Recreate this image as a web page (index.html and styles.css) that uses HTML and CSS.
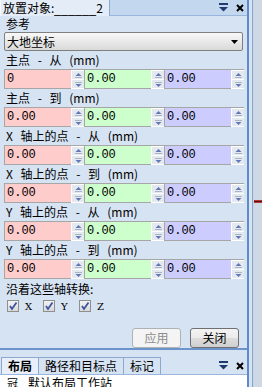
FILE: index.html
```html
<!DOCTYPE html>
<html>
<head>
<meta charset="utf-8">
<link rel="stylesheet" href="styles.css">
</head>
<body>
<div class="app">
  <div class="panel">
    <div class="hdr">
      <div class="tab">放置对象:<span class="us">______</span>2</div>
      <div class="hdr-icons">
        <svg class="ico" width="9" height="9" viewBox="0 0 9 9"><rect x="0" y="0" width="9" height="2" fill="#1f3a6e"/><polygon points="0,4 9,4 4.5,8.5" fill="#1f3a6e"/></svg>
        <svg class="ico" width="8" height="8" viewBox="0 0 8 8"><path d="M1 1 L7 7 M7 1 L1 7" stroke="#000" stroke-width="2"/></svg>
      </div>
    </div>
    <div class="body">
      <div class="lbl top">参考</div>
      <div class="select"><span>大地坐标</span><svg width="7" height="4" viewBox="0 0 7 4"><polygon points="0,0 7,0 3.5,4" fill="#000"/></svg></div>

      <div class="lbl">主点 - 从 (mm)</div>
      <div class="row">
        <div class="grp"><div class="inp pink">0</div><div class="spin"><div class="sb up"></div><div class="sb dn"></div></div></div>
        <div class="grp"><div class="inp green">0.00</div><div class="spin"><div class="sb up"></div><div class="sb dn"></div></div></div>
        <div class="grp"><div class="inp blue">0.00</div><div class="spin"><div class="sb up"></div><div class="sb dn"></div></div></div>
      </div>

      <div class="lbl">主点 - 到 (mm)</div>
      <div class="row">
        <div class="grp"><div class="inp pink">0.00</div><div class="spin"><div class="sb up"></div><div class="sb dn"></div></div></div>
        <div class="grp"><div class="inp green">0.00</div><div class="spin"><div class="sb up"></div><div class="sb dn"></div></div></div>
        <div class="grp"><div class="inp blue">0.00</div><div class="spin"><div class="sb up"></div><div class="sb dn"></div></div></div>
      </div>

      <div class="lbl">X 轴上的点 - 从 (mm)</div>
      <div class="row">
        <div class="grp"><div class="inp pink">0.00</div><div class="spin"><div class="sb up"></div><div class="sb dn"></div></div></div>
        <div class="grp"><div class="inp green">0.00</div><div class="spin"><div class="sb up"></div><div class="sb dn"></div></div></div>
        <div class="grp"><div class="inp blue">0.00</div><div class="spin"><div class="sb up"></div><div class="sb dn"></div></div></div>
      </div>

      <div class="lbl">X 轴上的点 - 到 (mm)</div>
      <div class="row">
        <div class="grp"><div class="inp pink">0.00</div><div class="spin"><div class="sb up"></div><div class="sb dn"></div></div></div>
        <div class="grp"><div class="inp green">0.00</div><div class="spin"><div class="sb up"></div><div class="sb dn"></div></div></div>
        <div class="grp"><div class="inp blue">0.00</div><div class="spin"><div class="sb up"></div><div class="sb dn"></div></div></div>
      </div>

      <div class="lbl">Y 轴上的点 - 从 (mm)</div>
      <div class="row">
        <div class="grp"><div class="inp pink">0.00</div><div class="spin"><div class="sb up"></div><div class="sb dn"></div></div></div>
        <div class="grp"><div class="inp green">0.00</div><div class="spin"><div class="sb up"></div><div class="sb dn"></div></div></div>
        <div class="grp"><div class="inp blue">0.00</div><div class="spin"><div class="sb up"></div><div class="sb dn"></div></div></div>
      </div>

      <div class="lbl">Y 轴上的点 - 到 (mm)</div>
      <div class="row">
        <div class="grp"><div class="inp pink">0.00</div><div class="spin"><div class="sb up"></div><div class="sb dn"></div></div></div>
        <div class="grp"><div class="inp green">0.00</div><div class="spin"><div class="sb up"></div><div class="sb dn"></div></div></div>
        <div class="grp"><div class="inp blue">0.00</div><div class="spin"><div class="sb up"></div><div class="sb dn"></div></div></div>
      </div>

      <div class="lbl conv">沿着这些轴转换:</div>
      <div class="checks">
        <div class="chk"><span class="box"><svg width="10" height="10" viewBox="0 0 10 10"><path d="M2 5 L4 8 L8.5 1.5" stroke="#3b55a3" stroke-width="1.8" fill="none"/></svg></span><span class="cl">X</span></div>
        <div class="chk"><span class="box"><svg width="10" height="10" viewBox="0 0 10 10"><path d="M2 5 L4 8 L8.5 1.5" stroke="#3b55a3" stroke-width="1.8" fill="none"/></svg></span><span class="cl">Y</span></div>
        <div class="chk"><span class="box"><svg width="10" height="10" viewBox="0 0 10 10"><path d="M2 5 L4 8 L8.5 1.5" stroke="#3b55a3" stroke-width="1.8" fill="none"/></svg></span><span class="cl">Z</span></div>
      </div>

      <div class="btns">
        <div class="btn dis">应用</div>
        <div class="btn">关闭</div>
      </div>
    </div>
    <div class="sep"></div>
    <div class="bhdr">
      <div class="btabs">
        <div class="btab sel">布局</div>
        <div class="btab">路径和目标点</div>
        <div class="btab">标记</div>
      </div>
      <div class="hdr-icons">
        <svg class="ico" width="9" height="9" viewBox="0 0 9 9"><rect x="0" y="0" width="9" height="2" fill="#1f3a6e"/><polygon points="0,4 9,4 4.5,8.5" fill="#1f3a6e"/></svg>
        <svg class="ico" width="8" height="8" viewBox="0 0 8 8"><path d="M1 1 L7 7 M7 1 L1 7" stroke="#000" stroke-width="2"/></svg>
      </div>
    </div>
    <div class="bbody"><span class="tico">冠</span><span>默认布局工作站</span></div>
  </div>
  <div class="edge"></div>
  <div class="strip"><div class="redline"></div></div>
</div>
</body>
</html>
```

FILE: styles.css
```css
html, body {
  margin: 0;
  padding: 0;
}
body {
  width: 262px;
  height: 387px;
  overflow: hidden;
  font-family: "Noto Sans CJK SC", "Noto Sans", sans-serif;
  font-size: 12px;
  color: #000;
  background: #cfd9e5;
}
.app {
  display: flex;
  height: 387px;
}
.panel {
  width: 247px;
  display: flex;
  flex-direction: column;
  background: #d6e3f3;
}
.edge {
  width: 7px;
  background: linear-gradient(to right, #5f8acb 0 2px, #d6e3f3 2px 5px, #8aa5cc 5px 6px, #c9d4e1 6px);
}
.strip {
  flex: 1;
  display: flex;
  flex-direction: column;
  background: #cfd9e5;
}
.redline {
  margin-top: 200px;
  height: 3px;
  background: linear-gradient(#e24a4a, #5a1010 50%, #e24a4a);
}
.hdr {
  height: 16px;
  display: flex;
  justify-content: space-between;
  background: #c3d7ef;
  border-bottom: 1px solid #9ab6dc;
  box-sizing: border-box;
}
.tab {
  width: 110px;
  height: 16px;
  box-sizing: border-box;
  background: #e3ecf7;
  border-right: 1px solid #8ea9cf;
  border-left: 1px solid #f5f8fc;
  padding-left: 2px;
  line-height: 15px;
  font-size: 12px;
  white-space: nowrap;
}
.us {
  font-family: "Liberation Sans", sans-serif;
  letter-spacing: 0.3px;
}
.hdr-icons {
  display: flex;
  align-items: center;
  gap: 8px;
  padding-right: 3px;
}
.body {
  flex: 1;
  padding: 0 4px;
  display: flex;
  flex-direction: column;
}
.lbl {
  height: 18px;
  line-height: 18px;
  padding-left: 2px;
  white-space: nowrap;
  word-spacing: 5px;
}
.lbl.top {
  height: 16px;
  line-height: 16px;
}
.lbl.conv {
  margin-top: 1px;
}
.select {
  height: 19px;
  box-sizing: border-box;
  border: 1px solid #7f7f7f;
  border-radius: 2px;
  background: linear-gradient(#f8f8f8, #e9e9e9 50%, #d9d9d9);
  display: flex;
  align-items: center;
  justify-content: space-between;
  padding: 0 4px 0 2px;
  font-size: 12px;
}
.row {
  display: flex;
  height: 20px;
}
.grp {
  display: flex;
  width: 80px;
}
.inp {
  width: 67px;
  height: 20px;
  box-sizing: border-box;
  border: 1px solid #a6a6a6;
  border-right: none;
  font-family: "Liberation Mono", "DejaVu Sans Mono", monospace;
  font-size: 12px;
  line-height: 18px;
  padding-left: 2px;
}
.pink { background: #ffcccc; }
.green { background: #ccffcc; }
.blue { background: #ccccff; }
.spin {
  width: 13px;
  height: 20px;
  box-sizing: border-box;
  background: #fff;
  padding: 1px 0 1px 1px;
  display: flex;
  flex-direction: column;
  gap: 1px;
  border-top: 1px solid #a6a6a6;
}
.sb {
  flex: 1;
  background-color: #e4e9f0;
  background-repeat: no-repeat;
  background-position: center;
}
.sb.up {
  background-image: url("data:image/svg+xml;utf8,<svg xmlns='http://www.w3.org/2000/svg' width='9' height='7'><polygon points='1.5,4 7.5,4 4.5,1' fill='%236378b4'/><rect x='1' y='5' width='7' height='1' fill='%23a9b4c8'/></svg>");
}
.sb.dn {
  background-image: url("data:image/svg+xml;utf8,<svg xmlns='http://www.w3.org/2000/svg' width='9' height='7'><rect x='1' y='1' width='7' height='1' fill='%23a9b4c8'/><polygon points='1.5,3 7.5,3 4.5,6' fill='%236378b4'/></svg>");
}
.checks {
  display: flex;
  height: 14px;
  margin-top: 1px;
  padding-left: 3px;
}
.chk {
  display: flex;
  align-items: center;
  width: 36px;
}
.box {
  width: 12px;
  height: 12px;
  box-sizing: border-box;
  border: 1px solid #8e8f8f;
  background: linear-gradient(#f3f3f3, #d8d8d8);
  display: flex;
  align-items: center;
  justify-content: center;
}
.cl {
  margin-left: 6px;
  font-family: "DejaVu Serif", "Liberation Serif", serif;
  font-size: 10px;
}
.btns {
  display: flex;
  justify-content: flex-end;
  gap: 9px;
  margin-top: 15px;
  padding-right: 4px;
}
.btn {
  width: 49px;
  height: 20px;
  box-sizing: border-box;
  border: 1px solid #707070;
  border-radius: 3px;
  background: linear-gradient(#f3f3f3, #ebebeb 50%, #dddddd 51%, #cfcfcf);
  text-align: center;
  line-height: 18px;
  font-size: 12px;
}
.btn.dis {
  border-color: #adb2b5;
  color: #8d8d8d;
  background: #f4f4f4;
}
.sep {
  height: 2px;
  background: #6d93cd;
}
.bhdr {
  height: 25px;
  display: flex;
  align-items: flex-end;
  justify-content: space-between;
  background: #d6e3f3;
  border-bottom: 1px solid #9ab6dc;
  box-sizing: border-box;
}
.bhdr .hdr-icons {
  height: 17px;
}
.btabs {
  display: flex;
  padding-left: 1px;
}
.btab {
  height: 17px;
  box-sizing: border-box;
  border: 1px solid #8ea9cf;
  border-bottom: none;
  border-left: none;
  padding: 0 6px;
  line-height: 16px;
  background: #d6e3f3;
  white-space: nowrap;
}
.btab:first-child {
  border-left: 1px solid #8ea9cf;
}
.btab.sel {
  background: #e8eff8;
  font-weight: bold;
}
.bbody {
  flex: 1;
  background: #fff;
  display: flex;
  gap: 10px;
  padding-left: 7px;
  padding-top: 1px;
  line-height: 14px;
  overflow: hidden;
  white-space: nowrap;
}
.tico {
  font-size: 11px;
}
```
